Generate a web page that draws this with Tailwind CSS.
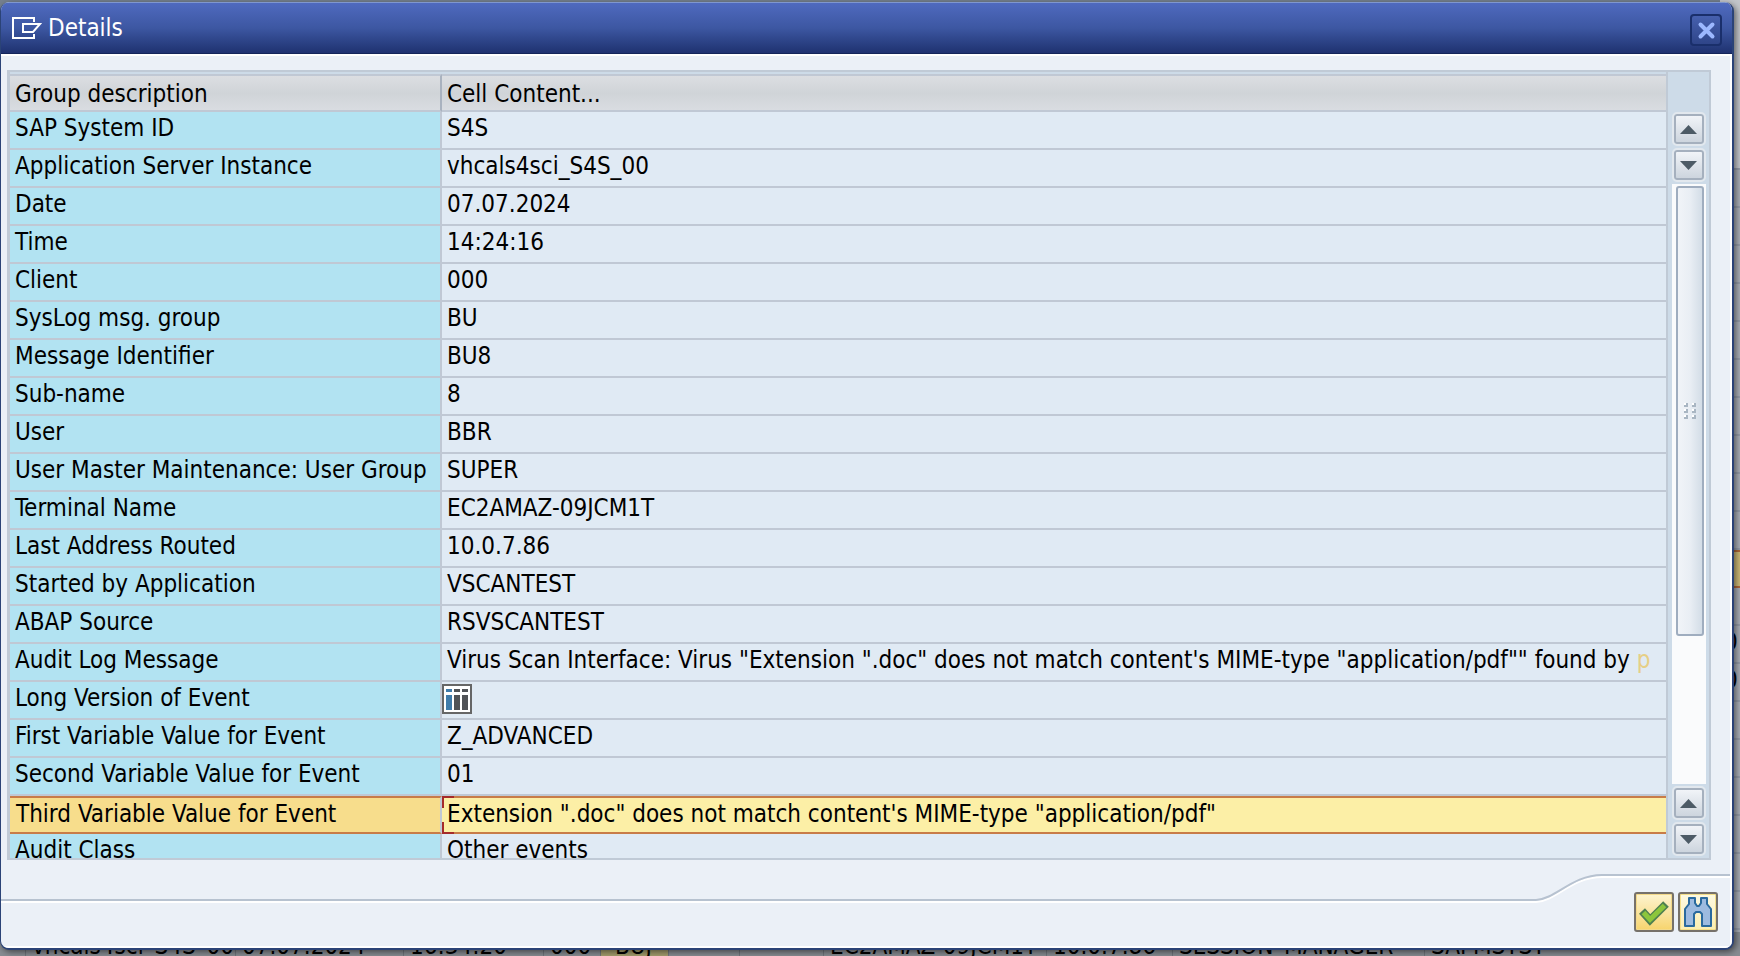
<!DOCTYPE html>
<html lang="en">
<head>
  <meta charset="UTF-8">
  <meta name="viewport" content="width=device-width, initial-scale=1.0">
  <title>Details</title>
  <script src="https://cdn.jsdelivr.net/npm/@tailwindcss/browser@4"></script>
</head>
<body class="relative h-screen overflow-hidden bg-[#75808f] font-['DejaVu_Sans_Condensed','DejaVu_Sans',sans-serif] text-black">

  <!-- Log list behind the dialog -->
  <div class="absolute inset-y-0 right-0 w-[20px] overflow-hidden bg-[#a9aeb6] text-[24px] leading-[32px]" aria-hidden="true">
    <div class="h-[170px] border-b-2 border-[#959ca8] bg-[#c3c6cb]"></div>
    <div id="strip"></div>
  </div>
  <div class="absolute inset-x-0 bottom-0 h-[24px] overflow-hidden bg-[#878c92] text-[24px] leading-[28px] whitespace-nowrap" aria-hidden="true">
    <div class="flex h-full">
      <span class="w-[26px] shrink-0 border-r border-[#6f757c]"></span>
      <span class="w-[210px] shrink-0 border-r border-[#6f757c] pl-1.5">vhcals4sci_S4S_00</span>
      <span class="w-[168px] shrink-0 border-r border-[#6f757c] pl-1.5">07.07.2024</span>
      <span class="w-[140px] shrink-0 border-r border-[#6f757c] pl-1.5">16:34:20</span>
      <span class="w-[57px] shrink-0 border-r border-[#6f757c] pl-1.5">000</span>
      <span class="w-[68px] shrink-0 border-r border-[#6f757c] bg-[#a39c6c] pl-3.5">BUJ</span>
      <span class="w-[71px] shrink-0 border-r border-[#6f757c]"></span>
      <span class="w-[84px] shrink-0 border-r border-[#6f757c]"></span>
      <span class="w-[223px] shrink-0 border-r border-[#6f757c] pl-1.5">EC2AMAZ-09JCM1T</span>
      <span class="w-[126px] shrink-0 border-r border-[#6f757c] pl-1.5">10.0.7.86</span>
      <span class="w-[252px] shrink-0 border-r border-[#6f757c] pl-1.5">SESSION_MANAGER</span>
      <span class="pl-1.5">SAPMSYST</span>
    </div>
  </div>

  <!-- Dialog -->
  <div class="relative flex h-full flex-col pt-[2px] pr-[6px] pb-[6px]">
    <main class="flex min-h-0 flex-1 flex-col overflow-hidden rounded-[9px] border-r-2 border-b-2 border-l border-[#2b4377] bg-[#ebf0f7] shadow-[2px_2px_6px_rgba(0,0,0,0.5)]">

      <header class="flex h-[52px] shrink-0 items-center border-t border-b border-t-[#7f97cf] border-b-[#14255a] bg-linear-to-b from-[#4f6abf] via-[#3d57a2] to-[#1f3270] pr-[10px] pl-[10px]">
        <svg class="mr-[5px] h-[26px] w-[32px]" viewBox="0 0 32 26" fill="none" stroke="#fff" stroke-width="2">
          <path d="M23 7V3H2v20h21v-4"/>
          <path d="M12 9h17l-7 8H12z"/>
        </svg>
        <h1 class="flex-1 text-[24px] leading-[32px] text-white">Details</h1>
        <button class="mt-[4px] flex size-[32px] items-center justify-center rounded-[4px] border-2 border-[#1a2f6b] bg-linear-to-b from-[#4660ae] to-[#2f4589]" aria-label="Close">
          <svg class="size-[19px]" viewBox="0 0 19 19" stroke="#9cb8ff" stroke-width="4" stroke-linecap="round"><path d="M3.500 3.500l12 12M15.500 3.500l-12 12"/></svg>
        </button>
      </header>

      <div class="flex min-h-0 flex-1 flex-col border-t-2 border-r-2 border-white pr-[19px] pl-[6px]">
        <div class="mt-[14px] flex min-h-0 flex-1 border-2 border-[#c0cad6] bg-[#cddbe8]">
          <div class="min-w-0 flex-1 overflow-hidden border-l border-[#c0cad6] pt-[2px]">
            <table class="w-full table-fixed border-separate border-spacing-0 text-[24px] leading-[32px] whitespace-nowrap">
              <thead>
                <tr class="h-[38px] bg-linear-to-b from-[#dddfe3] via-[#d0d4d8] to-[#dadde2] text-left">
                  <th scope="col" class="w-[432px] border-y-2 border-r-2 border-y-[#c0c8d4] border-r-[#a9b2bf] pl-[5px] align-bottom font-normal">Group description</th>
                  <th scope="col" class="border-y-2 border-[#c0c8d4] pl-[5px] align-bottom font-normal">Cell Content...</th>
                </tr>
              </thead>
              <tbody id="rows"></tbody>
            </table>
          </div>

          <!-- Scrollbar -->
          <div class="flex w-[43px] shrink-0 flex-col items-center border-l-2 border-[#c0cad6] pt-[40px] pb-[4px]">
            <button class="m-[2px] flex size-[30px] shrink-0 items-center justify-center rounded-[3px] border-2 border-[#a5b0be] bg-linear-to-b from-[#f1f4f8] to-[#cdd5de] outline-2 outline-[#e2e8ee]" aria-label="Scroll up">
              <svg class="h-[9px] w-[17px]" viewBox="0 0 17 9" fill="#4d5b66"><path d="M0 9L8.500 0 17 9z"/></svg>
            </button>
            <button class="mx-[2px] mt-[4px] flex size-[30px] shrink-0 items-center justify-center rounded-[3px] border-2 border-[#a5b0be] bg-linear-to-b from-[#f1f4f8] to-[#cdd5de] outline-2 outline-[#e2e8ee]" aria-label="Scroll down">
              <svg class="h-[9px] w-[17px]" viewBox="0 0 17 9" fill="#4d5b66"><path d="M0 0h17L8.500 9z"/></svg>
            </button>
            <div class="mt-[4px] mb-[2px] flex min-h-0 w-[34px] flex-1 flex-col items-end bg-[#fafbfc] pr-[2px]">
              <div class="mt-[2px] flex h-[75%] w-[28px] items-center justify-center rounded-[3px] border-2 border-[#9fadbf] bg-linear-to-r from-[#f1f4f8] via-[#e9eef4] to-[#d3dde7]">
                <svg class="h-[18px] w-[14px]" viewBox="0 0 14 18"><path fill="#a9b6c3" d="M1 1h4v4H1zM9 1h4v4H9zM1 7h4v4H1zM9 7h4v4H9zM1 13h4v4H1zM9 13h4v4H9z"/><path fill="#fff" d="M1 1h2v2H1zM9 1h2v2H9zM1 7h2v2H1zM9 7h2v2H9zM1 13h2v2H1zM9 13h2v2H9z"/></svg>
              </div>
            </div>
            <button class="m-[2px] flex size-[30px] shrink-0 items-center justify-center rounded-[3px] border-2 border-[#a5b0be] bg-linear-to-b from-[#f1f4f8] to-[#cdd5de] outline-2 outline-[#e2e8ee]" aria-label="Scroll up">
              <svg class="h-[9px] w-[17px]" viewBox="0 0 17 9" fill="#4d5b66"><path d="M0 9L8.500 0 17 9z"/></svg>
            </button>
            <button class="mx-[2px] mt-[4px] flex size-[30px] shrink-0 items-center justify-center rounded-[3px] border-2 border-[#a5b0be] bg-linear-to-b from-[#f1f4f8] to-[#cdd5de] outline-2 outline-[#e2e8ee]" aria-label="Scroll down">
              <svg class="h-[9px] w-[17px]" viewBox="0 0 17 9" fill="#4d5b66"><path d="M0 0h17L8.500 9z"/></svg>
            </button>
          </div>
        </div>
      </div>

      <footer class="flex h-[88px] shrink-0 border-r-2 border-b-2 border-white pt-[14px]">
        <div class="mt-[25px] flex-1 border-t-2 border-[#b7c2d0]"><div class="h-[2px] bg-white"></div></div>
        <svg class="h-[32px] w-[66px] shrink-0" viewBox="0 0 66 32" fill="none" stroke-width="2">
          <path d="M0 28C20 27 36 3 66 3" stroke="#fff"/>
          <path d="M0 26C20 25 36 1 66 1" stroke="#b7c2d0"/>
        </svg>
        <div class="flex w-[128px] shrink-0 gap-[4px] border-t-2 border-[#b7c2d0] pt-[16px] pl-[32px] shadow-[inset_0_2px_0_#fff]">
          <button class="flex size-[40px] items-center justify-center rounded-[3px] border-2 border-[#76716a] bg-linear-to-b from-[#fdf4cf] to-[#f7d46c] shadow-[inset_0_0_0_1px_#f3d98a]" aria-label="Continue">
            <svg class="size-[30px]" viewBox="0 0 30 30" fill="none" stroke-linejoin="miter"><path d="M3 14l8 9L27 7" stroke="#4f8050" stroke-width="8"/><path d="M4.500 15.500l6.500 7L25.500 8.500" stroke="#8cc63c" stroke-width="5"/></svg>
          </button>
          <button class="flex size-[40px] items-center justify-center rounded-[3px] border-2 border-[#76716a] bg-linear-to-b from-[#fdf9e2] to-[#fbeeb0] shadow-[inset_0_0_0_1px_#f3df8a]" aria-label="Find">
            <svg class="h-[32px] w-[30px]" viewBox="0 0 30 32" fill="#9dbbe0" stroke="#2a6a9e" stroke-width="2" stroke-linejoin="round"><path d="M6 2h6v5l2 3h2l2-3V2h6v6l4 5v17h-9V18l-2-2h-4l-2 2v12H2V13l4-5z"/></svg>
          </button>
        </div>
      </footer>
    </main>
  </div>

  <script>
    const icon = `<svg class="size-[30px]" viewBox="0 0 30 30"><path fill="#fff" stroke="#666" stroke-width="2" d="M1 1h28v28H1z"/><path fill="#3f7cab" d="M4 5h6v3H4zM4 11h6v15H4z"/><path fill="#505357" d="M12 5h6v3h-6zM12 11h6v15h-6zM20 5h6v3h-6zM20 11h6v15h-6z"/></svg>`;
    const data = [
      ["SAP System ID", "S4S"],
      ["Application Server Instance", "vhcals4sci_S4S_00"],
      ["Date", "07.07.2024"],
      ["Time", "14:24:16"],
      ["Client", "000"],
      ["SysLog msg. group", "BU"],
      ["Message Identifier", "BU8"],
      ["Sub-name", "8"],
      ["User", "BBR"],
      ["User Master Maintenance: User Group", "SUPER"],
      ["Terminal Name", "EC2AMAZ-09JCM1T"],
      ["Last Address Routed", "10.0.7.86"],
      ["Started by Application", "VSCANTEST"],
      ["ABAP Source", "RSVSCANTEST"],
      ["Audit Log Message", `Virus Scan Interface: Virus "Extension ".doc" does not match content's MIME-type "application/pdf"" found by <span class="text-[#e6cf86]">p</span>`],
      ["Long Version of Event", ""],
      ["First Variable Value for Event", "Z_ADVANCED"],
      ["Second Variable Value for Event", "01"],
      ["Third Variable Value for Event", `Extension ".doc" does not match content's MIME-type "application/pdf"`],
      ["Audit Class", "Other events"]
    ];
    const selected = 18;

    document.getElementById("rows").innerHTML = data.map(([name, value], i) => {
      if (i === selected) {
        return `<tr class="h-[38px] align-top">
          <td class="border-y-2 border-r-2 border-y-[#c87c48] border-r-[#c0c8d4] bg-[#f7dd8c] pl-[6px]">${name}</td>
          <td class="relative border-y-2 border-[#c87c48] bg-[#fcefa6] pl-[5px]">${value}
            <span class="absolute -top-[2px] left-0 h-[12px] w-[12px] border-t-2 border-l-2 border-[#a52a2a]"></span>
            <span class="absolute -bottom-[2px] left-0 h-[12px] w-[12px] border-b-2 border-l-2 border-[#a52a2a]"></span>
          </td>
        </tr>`;
      }
      return `<tr class="h-[38px] align-top">
        <td class="border-r-2 border-b-2 border-[#c0c8d4] bg-[#b2e3f2] pl-[5px]">${name}</td>
        <td class="overflow-hidden border-b-2 border-[#c0c8d4] bg-[#e0eaf4] ${value ? "pl-[5px]" : "pt-[2px]"}">${value || icon}</td>
      </tr>`;
    }).join("");

    // visible edge of the list rows right of the dialog
    document.getElementById("strip").innerHTML = Array.from({ length: 20 }, (_, i) => {
      if (i === 10) return '<div class="h-[38px] border-y-2 border-[#b0693a] bg-[#cdb977]"></div>';
      return `<div class="h-[38px] border-b-2 border-[#959ca8] pl-[4px]">${i === 12 || i === 13 ? "0" : ""}</div>`;
    }).join("");
  </script>
</body>
</html>
